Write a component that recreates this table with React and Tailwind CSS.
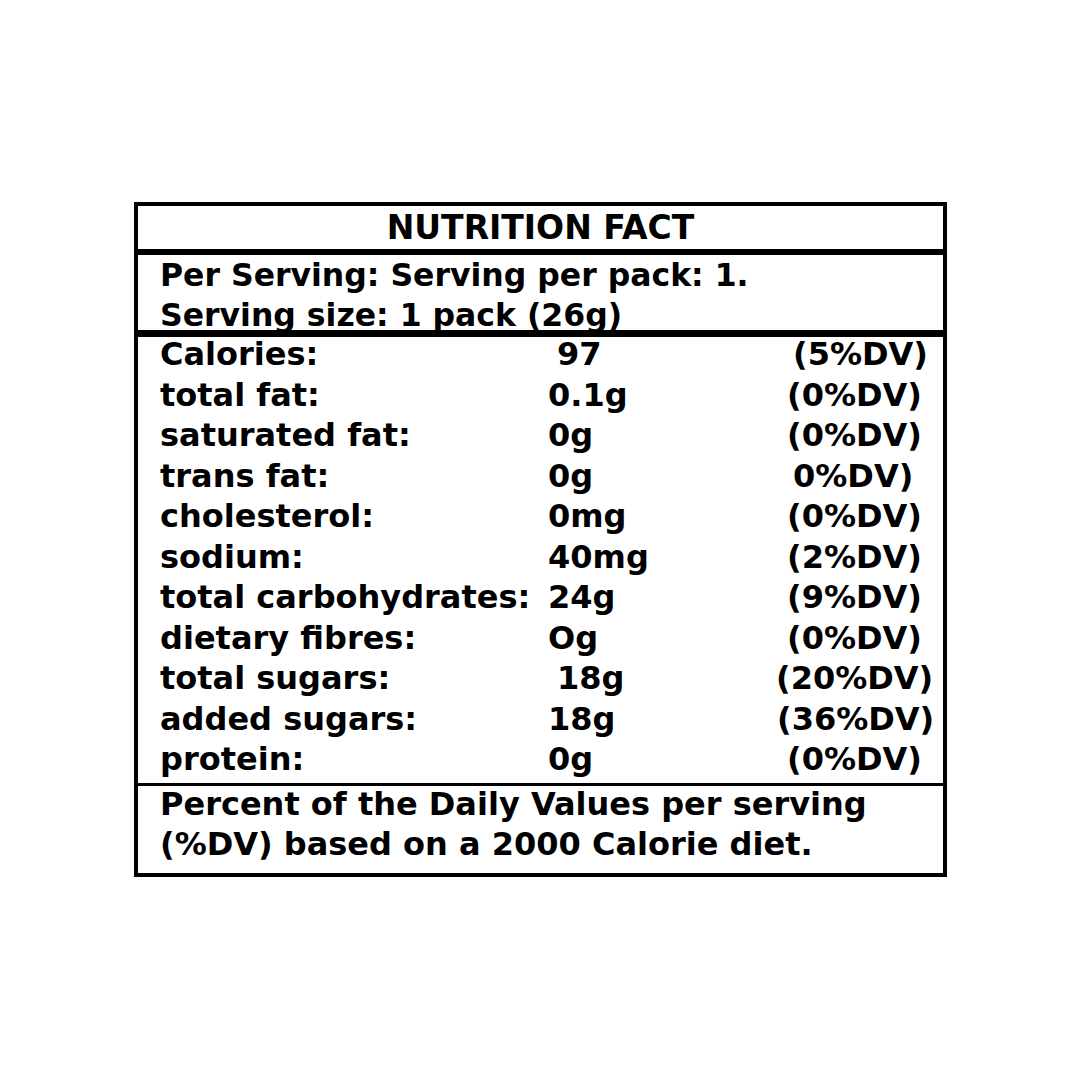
const rows = [
  { label: "Calories:", value: "97", dv: "(5%DV)", vPad: "pl-[9px]", dvPad: "pl-[17px]" },
  { label: "total fat:", value: "0.1g", dv: "(0%DV)", vPad: "pl-0", dvPad: "pl-[11px]" },
  { label: "saturated fat:", value: "0g", dv: "(0%DV)", vPad: "pl-0", dvPad: "pl-[11px]" },
  { label: "trans fat:", value: "0g", dv: "0%DV)", vPad: "pl-0", dvPad: "pl-[17px]" },
  { label: "cholesterol:", value: "0mg", dv: "(0%DV)", vPad: "pl-0", dvPad: "pl-[11px]" },
  { label: "sodium:", value: "40mg", dv: "(2%DV)", vPad: "pl-0", dvPad: "pl-[11px]" },
  { label: "total carbohydrates:", value: "24g", dv: "(9%DV)", vPad: "pl-0", dvPad: "pl-[11px]" },
  { label: "dietary fibres:", value: "Og", dv: "(0%DV)", vPad: "pl-0", dvPad: "pl-[11px]" },
  { label: "total sugars:", value: "18g", dv: "(20%DV)", vPad: "pl-[9px]", dvPad: "pl-0" },
  { label: "added sugars:", value: "18g", dv: "(36%DV)", vPad: "pl-0", dvPad: "pl-[1px]" },
  { label: "protein:", value: "0g", dv: "(0%DV)", vPad: "pl-0", dvPad: "pl-[11px]" },
];

export default function App() {
  return (
    <div
      className="w-[1080px] h-[1080px] bg-white pt-[202px] pl-[134px] text-black font-bold"
      style={{ fontFamily: '"DejaVu Sans", sans-serif' }}
    >
      <div className="w-[813px] border-4 border-black flex flex-col text-[32px]">
        <div className="h-[43px] border-b-[6px] border-black box-content flex items-center justify-center text-[33px] leading-none">
          NUTRITION FACT
        </div>
        <div className="h-[75px] border-b-[7px] border-black box-content pl-[22px] leading-[40px] text-[31.5px] overflow-hidden">
          <div>Per Serving: Serving per pack: 1.</div>
          <div>Serving size: 1 pack (26g)</div>
        </div>
        <div className="h-[446px] border-b-[3px] border-black box-content flex flex-col">
          {rows.map((r) => (
            <div key={r.label} className="h-[40.5px] flex items-start pt-[1px] pl-[22px] leading-none whitespace-nowrap">
              <div className="w-[388px] shrink-0">{r.label}</div>
              <div className={"w-[228px] shrink-0 " + r.vPad}>{r.value}</div>
              <div className={r.dvPad}>{r.dv}</div>
            </div>
          ))}
        </div>
        <div className="h-[87px] pl-[22px] leading-[40px]">
          <div className="-mt-[2px]">Percent of the Daily Values per serving</div>
          <div>(%DV) based on a 2000 Calorie diet.</div>
        </div>
      </div>
    </div>
  );
}
